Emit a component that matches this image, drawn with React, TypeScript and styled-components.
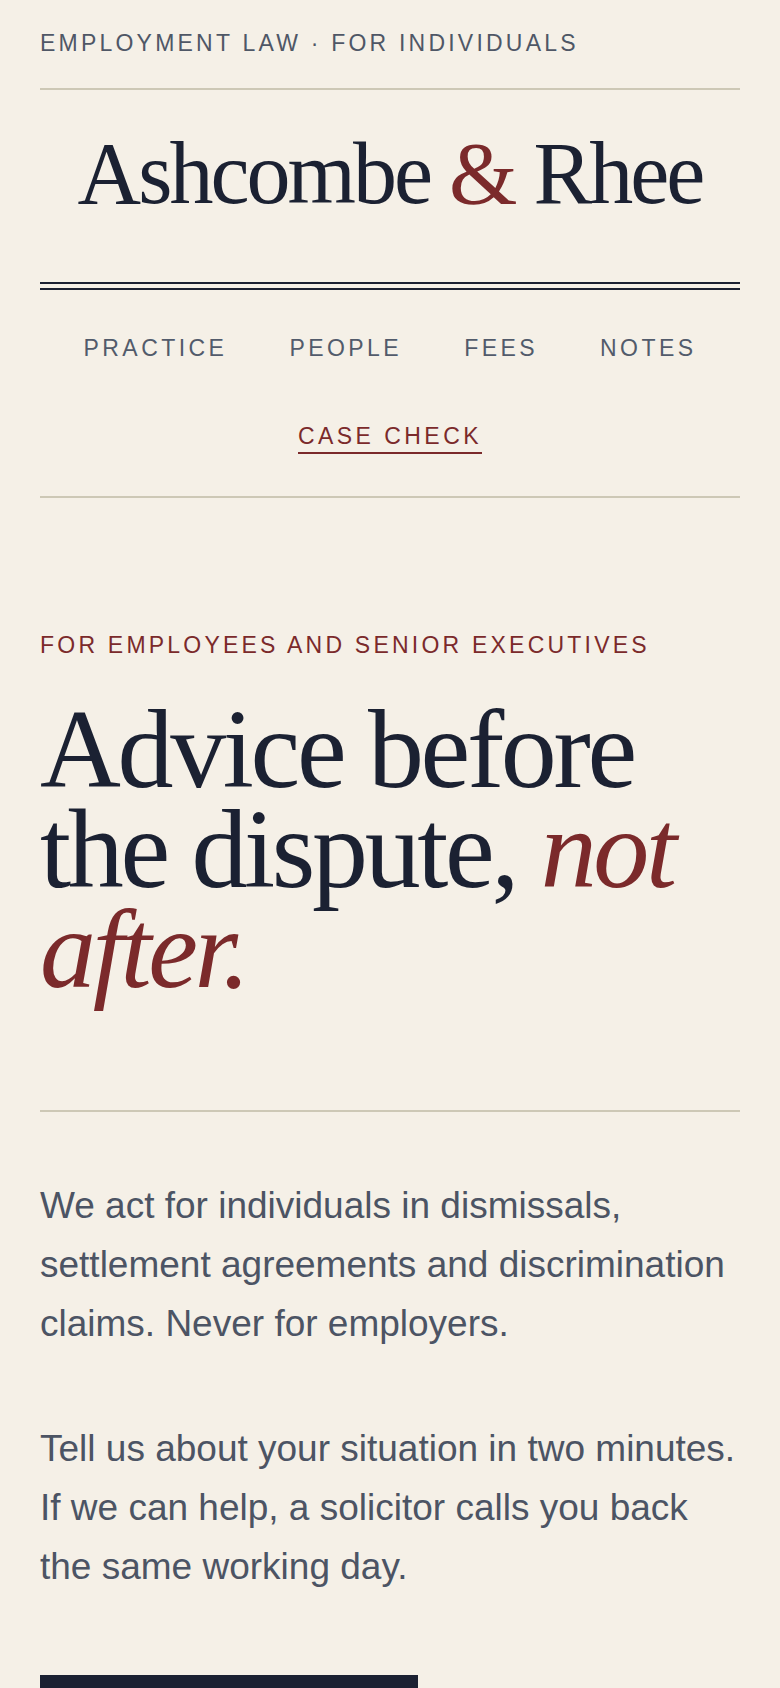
import React from "react";
import styled, { createGlobalStyle } from "styled-components";

const Global = createGlobalStyle`
  html, body { margin: 0; padding: 0; background: #f5f0e7; }
  body { font-family: "Liberation Sans", Arial, sans-serif; -webkit-font-smoothing: antialiased; }
  * { box-sizing: border-box; }
`;

const navy = "#1b2132";
const maroon = "#7b2a2b";
const slate = "#4c5464";
const hair = "#cdc8b6";

const Page = styled.div`
  background: #f5f0e7;
  min-height: 1688px;
  padding: 30px 40px 0;
  overflow: hidden;
`;

const Kicker = styled.div<{ $accent?: boolean }>`
  font-family: "Liberation Sans", Arial, sans-serif;
  font-size: 23px;
  line-height: 26px;
  letter-spacing: 0.14em;
  text-transform: uppercase;
  color: ${(p) => (p.$accent ? maroon : "#4f5766")};
`;

const Rule = styled.hr<{ $space: number }>`
  border: 0;
  height: 2px;
  background: ${hair};
  margin: ${(p) => p.$space}px 0 0;
`;

const Logo = styled.h1`
  margin: 0;
  padding: 40px 0 64px;
  text-align: center;
  font-family: "Liberation Serif", "Times New Roman", serif;
  font-weight: 400;
  font-size: 88px;
  line-height: 88px;
  letter-spacing: -0.034em;
  color: ${navy};
`;

const Amp = styled.span`
  color: ${maroon};
`;

const DoubleRule = styled.div`
  height: 8px;
  border-top: 2px solid ${navy};
  border-bottom: 2px solid ${navy};
`;

const Nav = styled.nav`
  display: flex;
  flex-wrap: wrap;
  justify-content: center;
  gap: 57px 62px;
  padding: 45px 0 42px;
  border-bottom: 2px solid ${hair};
`;

const NavLink = styled.a<{ $active?: boolean }>`
  font-family: "Liberation Sans", Arial, sans-serif;
  font-size: 23px;
  line-height: 26px;
  letter-spacing: 0.15em;
  text-transform: uppercase;
  text-decoration: none;
  padding-bottom: 3px;
  border-bottom: 2px solid ${(p) => (p.$active ? maroon : "transparent")};
  color: ${(p) => (p.$active ? maroon : "#525b6b")};
`;

const Hero = styled.section`
  padding-top: 134px;
`;

const Headline = styled.h2`
  margin: 41px 0 0;
  font-family: "Liberation Serif", "Times New Roman", serif;
  font-weight: 400;
  font-size: 112px;
  line-height: 100px;
  letter-spacing: -0.03em;
  color: ${navy};
`;

const Em = styled.em`
  color: ${maroon};
  font-style: italic;
`;

const Body = styled.div`
  padding-top: 64px;
`;

const Para = styled.p`
  margin: 0 0 66px;
  font-family: "Liberation Sans", Arial, sans-serif;
  font-size: 37px;
  line-height: 59px;
  color: ${slate};
`;

const Button = styled.a`
  display: inline-block;
  margin-top: 13px;
  width: 378px;
  padding: 28px 32px;
  background: ${navy};
  color: #f5f0e7;
  font-size: 22px;
  letter-spacing: 0.12em;
  text-transform: uppercase;
  text-decoration: none;
`;

export default function App() {
  return (
    <>
      <Global />
      <Page>
        <header>
          <Kicker>Employment law · For individuals</Kicker>
          <Rule $space={32} />
          <Logo>
            Ashcombe <Amp>&amp;</Amp> Rhee
          </Logo>
          <DoubleRule />
          <Nav>
            <NavLink href="#">Practice</NavLink>
            <NavLink href="#">People</NavLink>
            <NavLink href="#">Fees</NavLink>
            <NavLink href="#">Notes</NavLink>
            <NavLink href="#" $active>
              Case check
            </NavLink>
          </Nav>
        </header>
        <Hero>
          <Kicker $accent>For employees and senior executives</Kicker>
          <Headline>
            Advice before the dispute, <Em>not after.</Em>
          </Headline>
          <Rule $space={111} />
          <Body>
            <Para>
              We act for individuals in dismissals, settlement agreements and
              discrimination claims. Never for employers.
            </Para>
            <Para>
              Tell us about your situation in two minutes. If we can help, a
              solicitor calls you back the same working day.
            </Para>
            <Button href="#">Start case check</Button>
          </Body>
        </Hero>
      </Page>
    </>
  );
}
